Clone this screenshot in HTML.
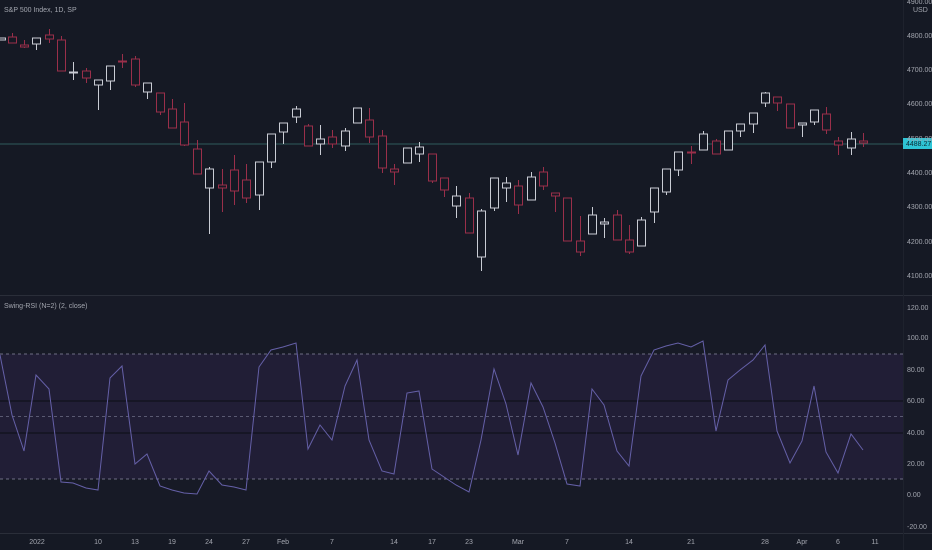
<!DOCTYPE html>
<html><head><style>
html,body{margin:0;padding:0;background:#151924;width:932px;height:550px;overflow:hidden}
svg text{font-family:"Liberation Sans",sans-serif;fill:#a3a6af;font-size:7px}
</style></head><body>
<svg id="s" width="932" height="550" xmlns="http://www.w3.org/2000/svg">
<rect width="932" height="550" fill="#151924"/>
<rect x="0" y="296" width="932" height="238" fill="#171a26"/>
<rect x="0" y="354" width="903" height="125" fill="#211e36"/>
<line x1="0" y1="354" x2="903" y2="354" stroke="#8a8ba3" stroke-dasharray="3,3" stroke-width="0.7"/>
<line x1="0" y1="416.5" x2="903" y2="416.5" stroke="#6e6f86" stroke-dasharray="3,3" stroke-width="0.7"/>
<line x1="0" y1="479" x2="903" y2="479" stroke="#8a8ba3" stroke-dasharray="3,3" stroke-width="0.7"/>
<line x1="0" y1="401" x2="903" y2="401" stroke="#0c0d14" stroke-width="1"/>
<line x1="0" y1="433" x2="903" y2="433" stroke="#0c0d14" stroke-width="1"/>
<line x1="0" y1="295.5" x2="932" y2="295.5" stroke="#2a2e39"/>
<line x1="0" y1="533.5" x2="932" y2="533.5" stroke="#2a2e39"/>
<line x1="903.5" y1="0" x2="903.5" y2="550" stroke="#1e222d"/>
<line x1="0" y1="144" x2="903" y2="144" stroke="#2f5b5c" stroke-width="1"/>
<g id="c"></g>
<polyline id="rsi" fill="none" stroke="#6560a8" stroke-width="1"/>
<text x="4" y="12" font-size="7.5">S&amp;P 500 Index, 1D, SP</text>
<text x="4" y="308">Swing-RSI (N=2) (2, close)</text>
<rect x="903" y="138" width="29" height="11" fill="#2ec5d6"/>
<text x="906" y="146" style="fill:#0d2a33">4488.27</text>
<g id="ax"></g>
</svg>
<script>
var C=[[1,38,40,38,40,0],[12,37,43,33,43,1],[24,45,47,40,48,1],[36,38,44,38,50,0],[49,35,39,29,43,1],[61,40,71,36,71,1],[73,72,72,62,80,0],[86,71,78,68,83,1],[98,80,85,80,110,0],[110,66,81,66,90,0],[122,61,61,54,68,1],[135,59,85,56,87,1],[147,83,92,83,99,0],[160,93,112,93,115,1],[172,109,128,99,128,1],[184,122,145,103,146,1],[197,149,174,140,174,1],[209,169,188,167,234,0],[222,185,188,169,212,1],[234,170,191,155,205,1],[246,180,198,164,203,1],[259,162,195,162,210,0],[271,134,162,134,168,0],[283,123,132,123,144,0],[296,109,117,106,123,0],[308,126,146,124,146,1],[320,139,144,125,155,0],[332,137,144,130,148,1],[345,131,146,128,151,0],[357,108,123,108,123,0],[369,120,137,108,143,1],[382,136,168,130,173,1],[394,169,172,164,185,1],[407,148,163,148,163,0],[419,147,154,142,162,0],[432,154,181,154,183,1],[444,178,190,178,197,1],[456,196,206,186,218,0],[469,198,233,193,233,1],[481,211,257,209,271,0],[494,178,208,178,211,0],[506,183,188,177,202,0],[518,186,205,180,214,1],[531,177,200,172,200,0],[543,172,186,167,190,1],[555,193,196,193,212,1],[567,198,241,198,241,1],[580,241,252,216,256,1],[592,215,234,207,234,0],[604,222,224,218,238,0],[617,215,240,210,240,1],[629,240,252,225,254,1],[641,220,246,217,246,0],[654,188,212,188,223,0],[666,169,192,169,195,0],[678,152,170,152,176,0],[691,152,152,146,164,1],[703,134,150,131,150,0],[716,141,154,139,154,1],[728,131,150,131,150,0],[740,124,131,124,137,0],[753,113,124,113,133,0],[765,93,103,92,107,0],[777,97,103,97,111,1],[790,104,128,104,128,1],[802,123,125,123,137,0],[814,110,122,110,125,0],[826,114,130,107,134,1],[838,141,145,137,155,1],[851,139,148,132,155,0],[863,141,143,133,147,1]];
var g='';
C.forEach(function(c){var col=c[5]?'#9a2f4a':'#c9ccd4';
g+='<line x1="'+(c[0]+.5)+'" y1="'+c[3]+'" x2="'+(c[0]+.5)+'" y2="'+c[4]+'" stroke="'+col+'"/>';
var h=Math.max(c[2]-c[1],1);
g+='<rect x="'+(c[0]-3.5)+'" y="'+c[1]+'" width="8" height="'+h+'" fill="#151924" stroke="'+col+'" stroke-width="1"/>';});
document.getElementById('c').innerHTML=g;
var R=[355,415,451,375,389,482,483,488,490,378,366,464,454,486,490,493,494,471,485,487,490,367,350,347,343,449,425,440,386,360,440,471,474,393,391,469,477,485,492,440,369,404,455,383,407,443,484,486,389,405,451,466,376,350,346,343,347,341,431,380,370,360,345,431,463,441,386,452,473,434,450];
var X=C.map(function(c){return c[0]});X[0]=0;
document.getElementById('rsi').setAttribute('points',R.map(function(y,i){return X[i]+','+y}).join(' '));
var a='';
[['4900.00',4],['4800.00',38],['4700.00',72],['4600.00',106],['4500.00',141],['4400.00',175],['4300.00',209],['4200.00',244],['4100.00',278],['120.00',310],['100.00',340],['80.00',372],['60.00',403],['40.00',435],['20.00',466],['0.00',497],['-20.00',529]].forEach(function(t){a+='<text x="907" y="'+t[1]+'">'+t[0]+'</text>'});
a+='<text x="913" y="12">USD</text>';
[['2022',37],['10',98],['13',135],['19',172],['24',209],['27',246],['Feb',283],['7',332],['14',394],['17',432],['23',469],['Mar',518],['7',567],['14',629],['21',691],['28',765],['Apr',802],['6',838],['11',875]].forEach(function(t){a+='<text x="'+t[1]+'" y="544" text-anchor="middle">'+t[0]+'</text>'});
document.getElementById('ax').innerHTML=a;
</script>
</body></html>
